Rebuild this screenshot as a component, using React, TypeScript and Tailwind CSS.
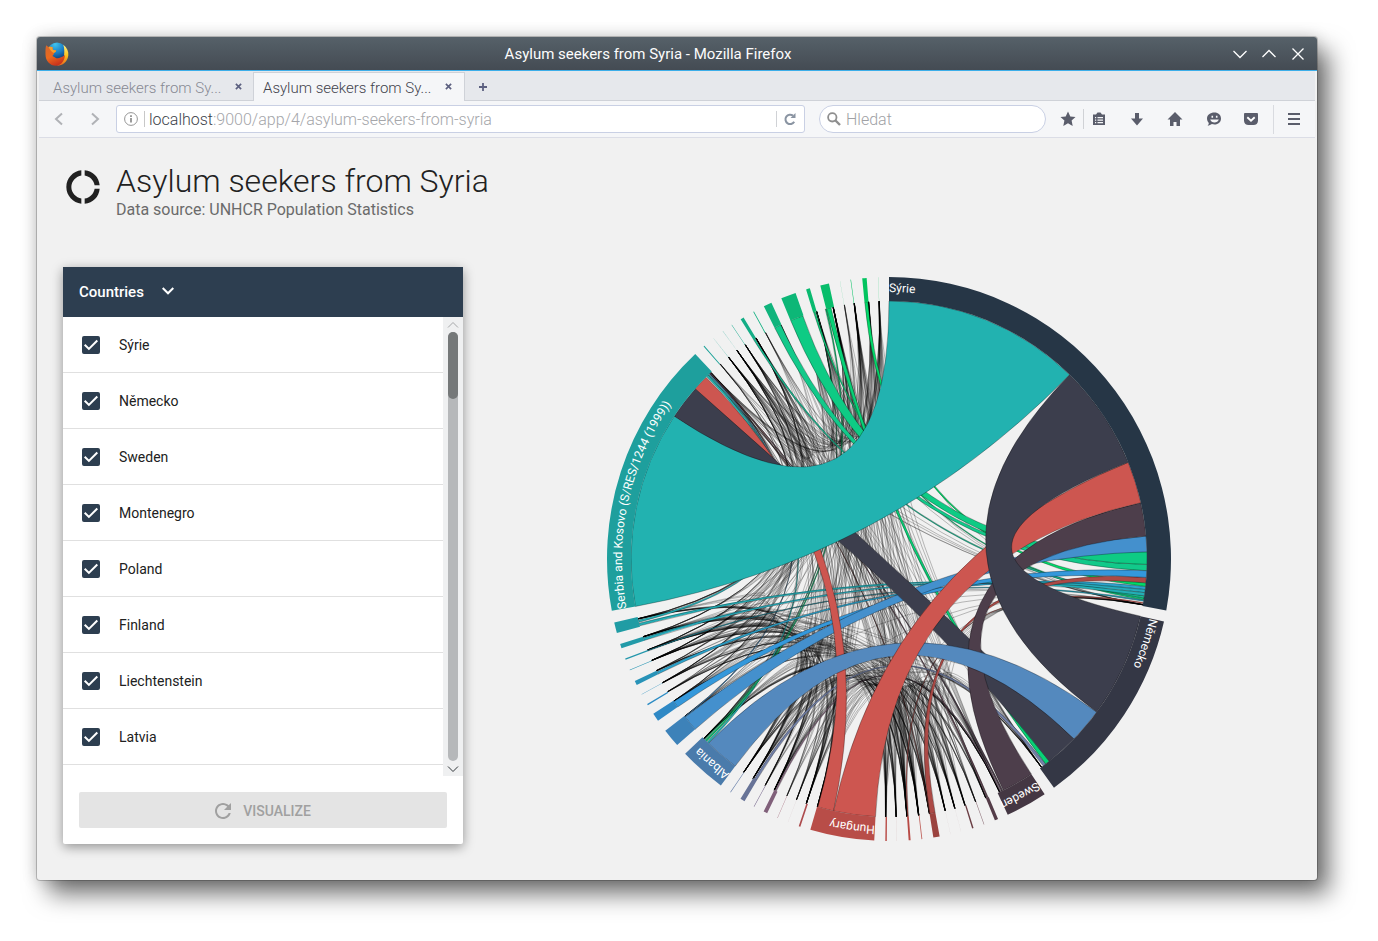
import React from "react";

type Group = { a: number; b: number; color: string; label?: string; thin?: boolean };
type Ribbon = { s: [number, number]; t: [number, number]; color: string };

const CX = 289;
const CY = 289;
const R_OUT = 282;
const R_IN = 258;

function at(deg: number, r: number): [number, number] {
  const rad = (deg * Math.PI) / 180;
  return [CX + r * Math.sin(rad), CY - r * Math.cos(rad)];
}
const p = (deg: number, r: number) => at(deg, r).map((v) => v.toFixed(2)).join(",");

function arcBand(a: number, b: number): string {
  const large = b - a > 180 ? 1 : 0;
  return `M${p(a, R_OUT)}A${R_OUT},${R_OUT} 0 ${large} 1 ${p(b, R_OUT)}L${p(b, R_IN)}A${R_IN},${R_IN} 0 ${large} 0 ${p(a, R_IN)}Z`;
}
function ribbonPath({ s, t }: Ribbon): string {
  return `M${p(s[0], R_IN)}A${R_IN},${R_IN} 0 0 1 ${p(s[1], R_IN)}Q${CX},${CY} ${p(t[0], R_IN)}A${R_IN},${R_IN} 0 0 1 ${p(t[1], R_IN)}Q${CX},${CY} ${p(s[0], R_IN)}Z`;
}

const mid = (c: number, w: number, color: string): Group => ({ a: c - w / 2, b: c + w / 2, color, thin: true });

const groups: Group[] = [
  { a: 0, b: 100.5, color: "#263646", label: "Sýrie" },
  { a: 102.8, b: 144.2, color: "#343745", label: "Německo" },
  { a: 146.5, b: 155.1, color: "#443743", label: "Sweden" },
  mid(157.6, 0.7, "#543c48"),
  mid(160.3, 0.12, "#8d7078"),
  mid(162.7, 0.3, "#6b3f45"),
  mid(165.2, 0.02, "#c9b4b6"),
  mid(167.4, 0.02, "#c9b4b6"),
  mid(170.3, 1.3, "#9b433f"),
  mid(173.3, 0.18, "#c0645e"),
  mid(175.8, 0.4, "#b84a45"),
  mid(178.4, 0.03, "#c9a4a4"),
  mid(180.6, 0.3, "#b84a45"),
  { a: 183, b: 196.2, color: "#b84d48", label: "Hungary" },
  mid(198.5, 0.35, "#ad4b4d"),
  mid(201, 0.02, "#d0b8be"),
  mid(203.3, 0.08, "#a2697a"),
  mid(206, 0.8, "#80607a"),
  mid(208.6, 0.12, "#7b6c90"),
  mid(211.3, 0.95, "#677397"),
  mid(214.2, 0.12, "#6a80aa"),
  { a: 216.6, b: 226.3, color: "#4a7bab", label: "Albania" },
  { a: 228.7, b: 232.5, color: "#3d82b9" },
  { a: 235, b: 236.7, color: "#2f89c5", thin: true },
  mid(238.9, 0.3, "#2d8cc4"),
  mid(241.3, 0.08, "#2c90bf"),
  mid(243.9, 0.9, "#2893b8"),
  mid(246.8, 0.12, "#2795b3"),
  mid(249.2, 0.25, "#2497ac"),
  mid(252, 0.9, "#229aa8"),
  { a: 254.8, b: 257, color: "#209ca4", thin: true },
  { a: 259.4, b: 316.6, color: "#1e9f9d", label: "Serbia and Kosovo (S/RES/1244 (1999))" },
  mid(319, 0.2, "#1ca298"),
  mid(321.5, 0.03, "#1aa593"),
  mid(323.9, 0.02, "#1aa593"),
  mid(326.1, 0.08, "#17a98d"),
  mid(328.6, 0.7, "#14ad86"),
  mid(331.3, 0.18, "#12b081"),
  mid(334.5, 1.7, "#10b47c"),
  mid(339.1, 3.1, "#0db777"),
  mid(343.3, 0.8, "#0aba70"),
  mid(346.8, 1.8, "#08bd6b"),
  mid(350, 0.02, "#06c065"),
  mid(352.2, 0.1, "#05c264"),
  mid(355, 0.9, "#02c45f"),
  mid(357.8, 0.03, "#02c45f"),
];

const ribbons: Ribbon[] = [
  { s: [0, 44.4], t: [259.4, 303.6], color: "#22b2b0" },
  { s: [44.4, 68], t: [102.8, 126.4], color: "#3c3e4d" },
  { s: [68, 77.4], t: [183, 192.4], color: "#cd5650" },
  { s: [77.4, 84.9], t: [146.5, 153.7], color: "#4d3e4b" },
  { s: [84.9, 88.4], t: [228.7, 232.2], color: "#4490cd" },
  { s: [88.4, 91.2], t: [337.6, 340.5], color: "#0ecb84" },
  { s: [91.2, 92.6], t: [333.7, 335.2], color: "#12c98a" },
  { s: [92.6, 94.1], t: [235, 236.5], color: "#3498db" },
  { s: [94.1, 95.3], t: [169.7, 170.9], color: "#ac4a46" },
  { s: [95.3, 96.1], t: [354.6, 355.3], color: "#02da6a" },
  { s: [96.1, 96.8], t: [243.5, 244.1], color: "#2ca3cc" },
  { s: [96.8, 97.5], t: [251.6, 252.2], color: "#26abbb" },
  { s: [97.5, 98.2], t: [255, 255.6], color: "#24aeb6" },
  { s: [98.2, 98.7], t: [328.3, 328.7], color: "#16c095" },
  { s: [98.7, 99.1], t: [343, 343.4], color: "#0bcf7c" },
  { s: [99.1, 99.4], t: [249.1, 249.3], color: "#28a8c0" },
  { s: [99.7, 99.95], t: [175.7, 175.9], color: "#cd524d" },
  { s: [126.4, 134.2], t: [216.6, 224.4], color: "#5489be" },
  { s: [134.2, 141.6], t: [303.6, 311.3], color: "#3c3e4d" },
  { s: [141.6, 142.6], t: [346, 347], color: "#08d277" },
  { s: [142.6, 143.3], t: [210.9, 211.5], color: "#7280a8" },
  { s: [192.4, 196], t: [311.3, 314.8], color: "#cd5650" },
  { s: [224.4, 224.8], t: [315, 315.5], color: "#22b2b0" },
  { s: [225, 225.4], t: [345.7, 346], color: "#08bd6b" },
  { s: [225.5, 225.7], t: [343.6, 343.7], color: "#0aba70" },
  { s: [232.2, 232.4], t: [315.8, 316], color: "#4490cd" },
  { s: [255.8, 256.3], t: [315.5, 315.7], color: "#24aeb6" },
  { s: [153.8, 154.2], t: [315.2, 315.3], color: "#4d3e4b" },
  { s: [157.4, 157.8], t: [316, 316.2], color: "#5e4450" },
  { s: [205.9, 206.2], t: [154.3, 154.5], color: "#8e6b87" },
  { s: [170.9, 171], t: [316.1, 316.2], color: "#ac4a46" },
];

// Spread of each ribbon's ends decides what is painted last.
ribbons.sort((x, y) => x.s[1] - x.s[0] - (y.s[1] - y.s[0]));

const ends: { at: number; pull: number }[] = [
  ...groups.filter((g) => g.thin).map((g) => ({ at: Math.min(g.b, (g.a + g.b) / 2 + 0.7), pull: 1 })),
  { at: 100.2, pull: 0.6 },
  { at: 143.8, pull: 0.8 },
  { at: 154.6, pull: 1.1 },
  { at: 196.1, pull: 0.9 },
  { at: 225.9, pull: 1.2 },
  { at: 232.4, pull: 0.9 },
  { at: 316.3, pull: 1.3 },
  { at: 316, pull: 0.8 },
];

function makeRandom(seed: number) {
  let n = seed;
  return () => {
    n = (n * 1664525 + 1013904223) % 4294967296;
    return n / 4294967296;
  };
}

function hairlines(): string[] {
  const rnd = makeRandom(20);
  const out: string[] = [];
  const weight = ends.map((e) => e.pull * (0.35 + rnd() * 0.85));
  for (let i = 0; i < ends.length; i++) {
    for (let j = i + 1; j < ends.length; j++) {
      if (rnd() > weight[i] * weight[j] * 0.66) continue;
      const a = ends[i].at + (rnd() - 0.5) * 0.1;
      const b = ends[j].at + (rnd() - 0.5) * 0.1;
      out.push(`M${p(a, R_IN)}Q${CX},${CY} ${p(b, R_IN)}`);
    }
  }
  return out;
}
const hair = hairlines();

function ChordDiagram() {
  return (
    <svg viewBox="0 0 578 578" className="block w-full max-w-[578px]" role="img" aria-label="Asylum seekers between countries">
      <g fill="none" stroke="#000" strokeWidth="0.5" strokeOpacity="0.5">
        {hair.map((d, i) => (
          <path key={i} d={d} />
        ))}
      </g>
      {ribbons.map((r, i) => (
        <path key={i} d={ribbonPath(r)} fill={r.color} stroke="#000" strokeWidth="0.5" strokeOpacity="0.6" />
      ))}
      {groups.map((g, i) => (
        <path key={i} d={arcBand(g.a, g.b)} fill={g.color} />
      ))}
      {groups.map((g, i) =>
        g.label ? (
          <g key={i}>
            <path id={`label-${i}`} d={`M${p(g.a, 267)}A267,267 0 0 1 ${p(g.a + 60, 267)}`} fill="none" />
            <text className="font-['Roboto'] text-[12px]" fill="#fff">
              <textPath href={`#label-${i}`}>{g.label}</textPath>
            </text>
          </g>
        ) : null,
      )}
    </svg>
  );
}

function FirefoxLogo() {
  return (
    <svg viewBox="0 0 24 24" className="size-6 shrink-0" aria-hidden="true">
      <defs>
        <radialGradient id="globe" cx="0.4" cy="0.1" r="0.95">
          <stop offset="0" stopColor="#3fc4ee" />
          <stop offset="0.5" stopColor="#1c7fc4" />
          <stop offset="1" stopColor="#0b2a66" />
        </radialGradient>
        <linearGradient id="fox" x1="0.1" y1="0.1" x2="0.5" y2="1">
          <stop offset="0" stopColor="#d9682a" />
          <stop offset="0.5" stopColor="#ec6a1e" />
          <stop offset="1" stopColor="#c9331c" />
        </linearGradient>
        <linearGradient id="tail" x1="0" y1="0" x2="0" y2="1">
          <stop offset="0" stopColor="#fdf08a" />
          <stop offset="0.5" stopColor="#fbc41f" />
          <stop offset="1" stopColor="#e8641c" />
        </linearGradient>
      </defs>
      <circle cx="12" cy="9.600" r="9.200" fill="url(#globe)" />
      <path d="M18.300 2.700C22 5.500 23.800 9.400 23.300 13.400 22.500 19.500 17.500 23.800 11.800 23.700c3.500-2 6.600-4.700 7.200-9.700.4-3.600.6-7.600-.7-11.300z" fill="url(#tail)" />
      <path d="M1.200 3.200C2 4 2.800 4.600 3.600 5c1.700-.5 3.300-.3 4.300.5-.7 1-.5 2 .6 2.600l2.700.4c.1 1.300-1.300 1.900-2.300 2.500.1 1.400-.8 2.100-1.500 2.900 2.600 1.300 4.400 3.500 8 1.700 1.700-.9 3.200-1.200 4.600-2.600-.3 5.300-3.700 10.700-9 10.700C4.900 23.700.5 18.600.500 12.400.5 9 .3 6 1.200 3.200z" fill="url(#fox)" />
      <path d="M3.600 5c1.700-.5 3.300-.3 4.300.5-.7 1-.5 2 .6 2.600l2.700.4c.1 1.300-1.300 1.900-2.300 2.500-1.700-.7-3.900-2.900-5.300-6z" fill="#f5a02c" />
    </svg>
  );
}

const iconCls = "size-4 fill-[#5a5d6b]";

function TabTitle({ active }: { active?: boolean }) {
  return (
    <div
      className={
        active
          ? "flex h-[29px] w-[212px] items-center justify-between border-x border-t border-[#cfd2d8] bg-[#f5f6f8] pt-[2px] pr-3 pl-[9px]"
          : "flex h-[29px] w-[214px] items-center justify-between border-b border-[#cfd2d8] pt-[4px] pr-[11px] pl-[14px]"
      }
    >
      <button className={active ? "text-[15px] font-light text-[#3f424c]" : "text-[15px] font-light text-[#868993]"}>
        Asylum seekers from Sy...
      </button>
      <button aria-label="Close tab" className="pb-[3px]">
        <svg viewBox="0 0 8 8" className="size-[7px] stroke-[#5c6080]" strokeWidth="1.900">
          <path d="M1 1l6 6M7 1l-6 6" />
        </svg>
      </button>
    </div>
  );
}

function BrowserChrome() {
  return (
    <header>
      <div className="flex h-[34px] items-center rounded-t-[3px] border-b border-[#3daee9] bg-linear-to-b from-[#566169] to-[#444b53]">
        <div className="flex w-[38px] justify-center pl-px">
          <FirefoxLogo />
        </div>
        <div className="flex-1 pt-[2px] text-center text-[15px] font-normal text-[#fcfcfc]">Asylum seekers from Syria - Mozilla Firefox</div>
        <div className="flex w-24 items-center gap-[15px] pl-3">
          <button aria-label="Minimize">
            <svg viewBox="0 0 14 14" className="size-[14px] fill-none stroke-white" strokeWidth="1.300"><path d="M0.500 4l6.500 6.500L13.500 4" /></svg>
          </button>
          <button aria-label="Maximize">
            <svg viewBox="0 0 14 14" className="size-[14px] fill-none stroke-white" strokeWidth="1.300"><path d="M0.500 10L7 3.500l6.500 6.500" /></svg>
          </button>
          <button aria-label="Close">
            <svg viewBox="0 0 14 14" className="size-[14px] fill-none stroke-white" strokeWidth="1.300"><path d="M1.500 1.500l11 11M12.500 1.500l-11 11" /></svg>
          </button>
        </div>
      </div>

      <div className="mx-[2px]">
        <div className="flex h-[30px] items-end bg-[#e6e8ec]">
          <TabTitle />
          <TabTitle active />
          <div className="flex h-[29px] flex-1 items-center border-b border-[#cfd2d8] pt-[2px] pl-[14px]">
            <button aria-label="New tab">
              <svg viewBox="0 0 8 8" className="size-2 stroke-[#5c6080]" strokeWidth="1.800"><path d="M4 0v8M0 4h8" /></svg>
            </button>
          </div>
        </div>

        <div className="flex h-[37px] items-center border-b border-[#dbdde6] bg-[#f5f6f8] pr-[14px] pl-[14px]">
          <button aria-label="Back" className="w-[36px]">
            <svg viewBox="0 0 12 14" className="h-[14px] w-3 fill-none stroke-[#b0b2b6]" strokeWidth="2"><path d="M9 1.500L3 7l6 5.500" /></svg>
          </button>
          <button aria-label="Forward" className="w-[27px]">
            <svg viewBox="0 0 12 14" className="h-[14px] w-3 fill-none stroke-[#b0b2b6]" strokeWidth="2"><path d="M3 1.500L9 7l-6 5.500" /></svg>
          </button>
          <div className="flex h-7 flex-1 items-center rounded-[3px] border border-[#c9d0e4] bg-white">
            <svg viewBox="0 0 14 14" className="ml-[7px] size-[14px] fill-none stroke-[#8a8a8a]" aria-hidden="true">
              <circle cx="7" cy="7" r="6.400" strokeWidth="0.900" />
              <path d="M7 6v4.500M7 3.200v1.700" strokeWidth="1.700" />
            </svg>
            <span className="ml-[6px] h-4 w-px bg-[#c8c8c8]" />
            <a href="#top" className="ml-1 flex-1 pt-[2px] text-base font-light text-[#a5a6aa]">
              <span className="text-[#3c3f49]">localhost</span>:9000/app/4/asylum-seekers-from-syria
            </a>
            <span className="h-4 w-px bg-[#d0d2d6]" />
            <button aria-label="Reload" className="mr-[7px] ml-[6px]">
              <svg viewBox="0 0 14 14" className="size-[14px] fill-none stroke-[#8a94a2]" strokeWidth="2">
                <path d="M11.200 9.800A4.700 4.700 0 1 1 10 3.600" />
                <path d="M12.500 1v5h-5z" className="fill-[#8a94a2] stroke-none" />
              </svg>
            </button>
          </div>
          <label className="ml-[14px] flex h-7 w-[227px] items-center rounded-full border border-[#c9d0e4] bg-white pl-[7px]">
            <svg viewBox="0 0 14 14" className="size-[14px] fill-none stroke-[#8f8f8f]" aria-hidden="true">
              <circle cx="5.300" cy="5.300" r="4.200" strokeWidth="1.800" />
              <path d="M8.500 8.500L13 13" strokeWidth="2.400" />
            </svg>
            <input aria-label="Search" placeholder="Hledat" className="ml-[5px] w-40 bg-transparent pt-[2px] text-base font-light outline-none placeholder:text-[#a0a1a5]" />
          </label>
          <div className="ml-[14px] flex items-center">
            <button aria-label="Bookmark this page">
              <svg viewBox="0 0 16 16" className={iconCls}><path d="M8 .5l2.300 4.900 5.200.6-3.900 3.600 1.100 5.400L8 12.300 3.300 15l1.100-5.400L.5 6l5.200-.6z" /></svg>
            </button>
            <span className="mx-[7px] h-5 w-px bg-[#d0d2d6]" />
            <button aria-label="Show bookmarks">
              <svg viewBox="0 0 16 16" className={iconCls} fillRule="evenodd"><path d="M5 3.500L6.500 1.500h3L11 3.500h3V14H2V3.500zM4 6v1.200h1.200V6zm2.500 0v1.200H12V6zM4 8.500v1.200h1.200V8.500zm2.500 0v1.200H12V8.500zM4 11v1.200h1.200V11zm2.500 0v1.200H12V11z" /></svg>
            </button>
            <button aria-label="Downloads" className="ml-[22px]">
              <svg viewBox="0 0 16 16" className={iconCls}><path d="M6 2h4v5.500h4L8 14.500 2 7.500h4z" /></svg>
            </button>
            <button aria-label="Home" className="ml-[22px]">
              <svg viewBox="0 0 16 16" className={iconCls}><path d="M8 1l7.500 7.500H13V15H9.500v-4h-3v4H3V8.500H.5z" /></svg>
            </button>
            <button aria-label="Chat" className="ml-[23px]">
              <svg viewBox="0 0 16 16" className={iconCls} fillRule="evenodd"><path d="M8.500 1.500c3.800 0 6.500 2.500 6.500 6s-2.700 6-6.500 6c-1 0-1.800-.1-2.600-.4C4.800 14 3.200 14.600 1.500 14.700c.8-.8 1.300-1.800 1.300-2.800C1.700 10.800 1 9.300 1 7.500c0-3.500 3.200-6 7.500-6zM5.500 4.700v2h1.600v-2zm4.400 0v2h1.600v-2zM4.200 8.500c.6 1.900 2.200 3 4.300 3s3.700-1.100 4.300-3z" /></svg>
            </button>
            <button aria-label="Pocket" className="ml-[21px]">
              <svg viewBox="0 0 16 16" className={iconCls}><path d="M1 3.200C1 2.500 1.500 2 2.200 2h11.600c.7 0 1.200.5 1.200 1.200V9.500c0 3-2 4.500-4.500 4.500h-5C3 14 1 12.500 1 9.500z" /><path d="M4.300 6.200L8 9.700l3.700-3.500" className="fill-none stroke-white" strokeWidth="1.900" /></svg>
            </button>
            <span className="mr-[13px] ml-[14px] h-[29px] w-px bg-[#d9dbe0]" />
            <button aria-label="Open menu">
              <svg viewBox="0 0 14 14" className="size-[14px] fill-[#5a5d6b]"><path d="M1 1h12v2H1zM1 6h12v2H1zM1 11h12v2H1z" /></svg>
            </button>
          </div>
        </div>
      </div>
    </header>
  );
}

const countries = ["Sýrie", "Německo", "Sweden", "Montenegro", "Poland", "Finland", "Liechtenstein", "Latvia"];

function CountryPanel() {
  return (
    <section className="w-[400px] shrink-0 rounded-b-[2px] bg-white shadow-[0_3px_12px_rgba(0,0,0,0.4)]">
      <button className="flex h-[50px] w-full items-center bg-[#2d3e50] px-4 text-[15px] font-medium text-white">
        Countries
        <svg viewBox="0 0 12 8" className="mb-[2px] ml-[18px] h-2 w-3 fill-none stroke-white" strokeWidth="2"><path d="M0.700 1l5.300 5.300L11.300 1" /></svg>
      </button>
      <div className="flex">
        <ul className="flex-1 pb-[11px]">
          {countries.map((name) => (
            <li key={name} className="h-14 border-b border-[#e0e0e0]">
              <label className="flex h-full items-center pl-[19px] text-[14px] text-[#212121]">
                <span className="relative flex size-[18px]">
                  <input type="checkbox" defaultChecked className="peer size-[18px] appearance-none rounded-[2px] border-2 border-[#2d3e50] checked:bg-[#2d3e50]" />
                  <svg viewBox="0 0 18 18" className="pointer-events-none absolute inset-0 hidden fill-none stroke-white peer-checked:block" strokeWidth="2">
                    <path d="M2.700 8.700l4.200 4.200L15.300 4.500" />
                  </svg>
                </span>
                <span className="ml-[19px] pt-[2px]">{name}</span>
              </label>
            </li>
          ))}
        </ul>
        <div className="flex w-5 flex-col items-center bg-[#eff0f1]" aria-hidden="true">
          <svg viewBox="0 0 12 7" className="my-1 h-[7px] w-3 shrink-0 fill-none stroke-[#a5a7a9]"><path d="M1 6.500L6 1.500l5 5" /></svg>
          <div className="w-[10px] flex-1 rounded-full bg-[#b6b8ba]">
            <div className="h-[67px] rounded-full bg-[#757879]" />
          </div>
          <svg viewBox="0 0 12 7" className="mt-[5px] mb-[3px] h-[7px] w-3 shrink-0 fill-none stroke-[#31363b]"><path d="M1 0.500l5 5 5-5" /></svg>
        </div>
      </div>
      <div className="p-4">
        <button className="flex h-9 w-full items-center justify-center rounded-[2px] bg-[#e4e4e4] pt-px text-sm font-medium text-[#a0a0a0]">
          <svg viewBox="4 4 16 16" className="mr-3 size-4 fill-[#a0a0a0]" aria-hidden="true">
            <path d="M17.650 6.350C16.200 4.900 14.210 4 12 4c-4.420 0-7.990 3.580-7.990 8s3.570 8 7.990 8c3.730 0 6.840-2.550 7.730-6h-2.080c-.82 2.330-3.040 4-5.650 4-3.310 0-6-2.690-6-6s2.690-6 6-6c1.660 0 3.140.69 4.220 1.780L13 11h7V4l-2.350 2.350z" />
          </svg>
          VISUALIZE
        </button>
      </div>
    </section>
  );
}

export default function App() {
  return (
    <div className="min-h-screen bg-white pt-[37px] pr-[61px] pb-[61px] pl-[37px] font-['Roboto',sans-serif]">
      <div className="rounded-[3px] bg-[#f1f1f1] shadow-[0_0_0_1px_rgba(0,0,0,0.2),0_0_16px_rgba(0,0,0,0.18),12px_14px_24px_rgba(0,0,0,0.55)]">
        <BrowserChrome />
        <main className="px-[26px] pb-8">
          <div className="flex gap-[13px] pt-[25px]">
            <svg viewBox="0 0 24 24" className="mt-1 size-10 fill-[#212121]" aria-hidden="true">
              <path d="M11 5.080V2c-5 .5-9 4.810-9 10s4 9.500 9 10v-3.080c-3-.48-6-3.400-6-6.920s3-6.440 6-6.920zM18.970 11H22c-.47-5-4-8.530-9-9v3.080C16 5.510 18.540 8 18.970 11zM13 18.920V22c5-.47 8.530-4 9-9h-3.030c-.43 3-2.970 5.490-5.970 5.920z" />
            </svg>
            <div>
              <h1 className="text-[32px] leading-9 font-light text-[#212121]">Asylum seekers from Syria</h1>
              <p className="text-base leading-[22px] text-[#6b6b6b]">Data source: UNHCR Population Statistics</p>
            </div>
          </div>
          <div className="mt-[46px] flex items-start">
            <CountryPanel />
            <div className="flex flex-1 justify-center pt-[3px] pl-6">
              <ChordDiagram />
            </div>
          </div>
        </main>
      </div>
    </div>
  );
}
